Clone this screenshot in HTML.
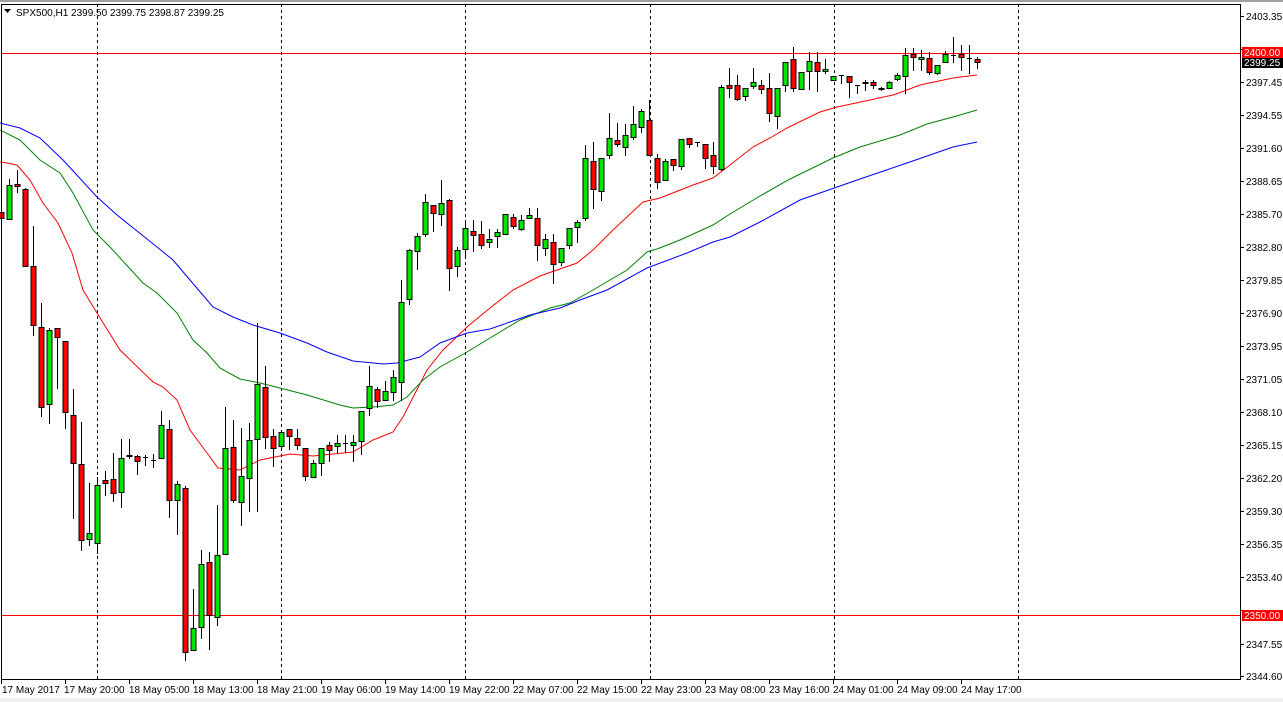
<!DOCTYPE html>
<html><head><meta charset="utf-8"><style>
html,body{margin:0;padding:0;background:#fff;width:1283px;height:702px;overflow:hidden}
svg{display:block}
text{font-family:"Liberation Sans",sans-serif;font-size:10px;fill:#000}
</style></head><body>
<svg id="c" width="1283" height="702" xmlns="http://www.w3.org/2000/svg">
<rect x="0" y="0" width="1283" height="2" fill="#a0a0a0"/>
<rect x="0" y="698" width="1283" height="4" fill="#f0f0f0"/>
<g id="grid" stroke="#000" stroke-width="1" stroke-dasharray="3,3">
<line x1="97.5" y1="4" x2="97.5" y2="679"/><line x1="281.5" y1="4" x2="281.5" y2="679"/>
<line x1="465.5" y1="4" x2="465.5" y2="679"/><line x1="650.5" y1="4" x2="650.5" y2="679"/>
<line x1="834.5" y1="4" x2="834.5" y2="679"/><line x1="1018.5" y1="4" x2="1018.5" y2="679"/>
</g>
<rect x="1" y="53" width="1239" height="1" fill="red"/>
<rect x="1" y="615" width="1239" height="1" fill="red"/>
<g id="ma" fill="none" stroke-width="1"></g>
<g id="cs"></g>
<rect x="1.5" y="4.5" width="1239" height="675" fill="none" stroke="#000"/>
<polygon points="4,9 11,9 7.5,13" fill="#000"/>
<text x="16" y="16">SPX500,H1  2399.50 2399.75 2398.87 2399.25</text>
<g id="ax"></g>
<rect x="1242" y="47" width="41" height="11" fill="red"/>
<text x="1244" y="56" style="fill:#fff">2400.00</text>
<rect x="1242" y="58" width="41" height="10" fill="#000"/>
<text x="1244" y="66" style="fill:#fff">2399.25</text>
<rect x="1242" y="610" width="41" height="11" fill="red"/>
<text x="1244" y="619" style="fill:#fff">2350.00</text>
<g id="tx">
<text x="2" y="693">17 May 2017</text><text x="64" y="693">17 May 20:00</text><text x="129" y="693">18 May 05:00</text>
<text x="193" y="693">18 May 13:00</text><text x="257" y="693">18 May 21:00</text><text x="321" y="693">19 May 06:00</text>
<text x="385" y="693">19 May 14:00</text><text x="449" y="693">19 May 22:00</text><text x="513" y="693">22 May 07:00</text>
<text x="577" y="693">22 May 15:00</text><text x="641" y="693">22 May 23:00</text><text x="705" y="693">23 May 08:00</text>
<text x="769" y="693">23 May 16:00</text><text x="833" y="693">24 May 01:00</text><text x="897" y="693">24 May 09:00</text>
<text x="961" y="693">24 May 17:00</text>
</g>
<g id="pl">
<text x="1246" y="20">2403.35</text><text x="1246" y="86">2397.45</text><text x="1246" y="119">2394.55</text>
<text x="1246" y="152">2391.60</text><text x="1246" y="185">2388.65</text><text x="1246" y="218">2385.70</text>
<text x="1246" y="251">2382.80</text><text x="1246" y="284">2379.85</text><text x="1246" y="317">2376.90</text>
<text x="1246" y="350">2373.95</text><text x="1246" y="383">2371.05</text><text x="1246" y="416">2368.10</text>
<text x="1246" y="449">2365.15</text><text x="1246" y="482">2362.20</text><text x="1246" y="515">2359.30</text>
<text x="1246" y="548">2356.35</text><text x="1246" y="581">2353.40</text><text x="1246" y="648">2347.55</text>
<text x="1246" y="680">2344.60</text>
</g>
</svg>
<script>
var NS="http://www.w3.org/2000/svg";
function el(p,t,a){var e=document.createElementNS(NS,t);for(var k in a)e.setAttribute(k,a[k]);p.appendChild(e);return e;}
var ax=document.getElementById('ax');
[16,49,82,115,148,181,214,247,280,313,346,379,412,445,478,511,544,577,610,644,676].forEach(function(y){el(ax,'line',{x1:1240,x2:1244,y1:y+.5,y2:y+.5,stroke:'#000'});});
for(var i=0;i<16;i++){var x=1.5+64*i;el(ax,'line',{x1:x,x2:x,y1:679,y2:684,stroke:'#000'});}
var C=[[212,218,207,233],[219,185,179,219],[184,186,170,192],[189,266,188,266],[266,325,226,335],[327,407,303,416],[404,330,328,423],[328,337,328,388],[341,412,341,428],[415,463,389,518],[464,540,422,550],[539,533,483,545],[543,485,477,553],[480,483,471,495],[479,493,453,501],[492,458,439,507],[455,456,439,458],[456,461,455,474],[457,457,455,465],[460,460,454,467],[458,425,411,458],[429,500,420,517],[500,484,481,534],[488,652,486,660],[650,628,589,650],[627,564,550,638],[562,615,552,649],[617,555,505,625],[554,448,407,554],[447,500,420,502],[502,476,428,525],[478,440,423,511],[439,384,323,511],[387,437,366,448],[436,448,429,466],[446,432,431,448],[429,436,429,449],[438,445,429,449],[448,476,448,480],[477,463,460,477],[463,448,448,475],[445,450,442,461],[446,443,435,452],[443,443,435,452],[445,442,435,461],[441,411,411,454],[408,386,366,415],[389,401,387,407],[400,391,381,400],[392,377,370,400],[382,302,280,400],[299,250,249,304],[251,236,233,269],[234,202,194,236],[205,213,205,231],[214,203,180,225],[200,268,199,290],[266,250,247,276],[249,228,220,258],[231,235,220,251],[234,245,221,248],[242,239,229,247],[236,232,229,247],[234,214,214,234],[217,226,214,228],[229,220,215,230],[218,215,208,218],[218,245,208,260],[248,239,234,255],[242,264,234,283],[262,248,248,265],[245,228,228,248],[227,222,220,242],[218,158,145,220],[161,189,142,208],[191,158,158,200],[155,138,113,158],[140,144,123,146],[147,135,124,155],[137,124,106,139],[127,111,109,132],[120,155,100,155],[158,182,154,188],[180,161,159,180],[159,165,159,170],[166,139,139,169],[138,144,138,147],[142,142,142,146],[144,158,144,168],[155,166,142,173],[169,87,85,170],[85,88,68,97],[85,99,75,100],[96,88,88,100],[86,82,68,88],[85,89,80,93],[88,113,73,121],[116,88,88,128],[85,62,62,91],[59,88,47,91],[89,72,72,89],[71,61,52,89],[62,71,52,91],[71,69,59,73],[80,76,76,80],[75,75,75,83],[76,82,76,97],[85,85,85,93],[82,83,80,90],[82,85,80,88],[88,89,87,90],[88,82,81,88],[79,75,73,80],[76,55,48,93],[54,57,48,70],[59,57,50,70],[58,72,52,74],[73,65,65,74],[62,54,51,62],[55,55,37,62],[54,57,45,70],[58,58,45,73],[59,62,57,68]];
var cs=document.getElementById('cs');
C.forEach(function(c,i){
 var x=1+8*i, o=c[0], cl=c[1];
 el(cs,'line',{x1:x+.5,x2:x+.5,y1:c[2],y2:c[3]+1,stroke:'#000'});
 var top=Math.min(o,cl),bot=Math.max(o,cl);
 if(bot-top<1){el(cs,'line',{x1:x-2,x2:x+3,y1:top+.5,y2:top+.5,stroke:'#000'});return;}
 var col=cl<o?'#00e600':(cl>o?'#ff0000':'#000');
 el(cs,'rect',{x:x-2,y:top+.5,width:5,height:bot-top,fill:col,stroke:'#000'});
});
var ma=document.getElementById('ma');
var R=[[0,162],[7,163],[17,165],[30,180],[43,203],[58,223],[72,253],[83,290],[97,313],[120,350],[153,382],[163,387],[177,400],[190,430],[207,453],[218,468],[240,470],[260,460],[290,454],[313,456],[353,452],[373,440],[393,432],[403,417],[427,370],[443,350],[467,327],[490,308],[513,290],[540,276],[577,263],[593,250],[613,230],[643,202],[660,198],[693,185],[713,178],[730,165],[753,147],[770,138],[787,128],[820,112],[837,107],[870,100],[893,95],[907,90],[920,85],[953,78],[977,75]];
var G=[[0,130],[20,140],[40,160],[60,173],[73,193],[93,230],[110,247],[143,283],[157,293],[177,313],[193,340],[207,353],[220,368],[240,379],[260,383],[280,388],[307,395],[340,405],[353,408],[373,407],[393,405],[407,397],[423,380],[440,367],[467,352],[490,338],[520,320],[550,308],[570,303],[593,290],[627,270],[647,252],[657,249],[680,240],[713,225],[730,214],[760,196],[790,179],[833,158],[860,147],[900,135],[927,124],[953,117],[977,110]];
var B=[[0,123],[20,128],[40,138],[63,160],[97,197],[117,215],[157,247],[173,260],[190,280],[213,307],[233,317],[253,325],[280,333],[307,343],[327,352],[353,361],[383,364],[397,363],[420,357],[440,343],[467,333],[490,329],[530,315],[560,308],[580,300],[607,290],[647,268],[687,253],[713,242],[730,237],[760,222],[800,200],[860,179],[907,163],[953,147],[977,142]];
[[R,'#ff0000'],[G,'#008000'],[B,'#0000ff']].forEach(function(p){
 el(ma,'polyline',{points:p[0].map(function(a){return a.join(',')}).join(' '),stroke:p[1],fill:'none'});
});
</script>
</body></html>
